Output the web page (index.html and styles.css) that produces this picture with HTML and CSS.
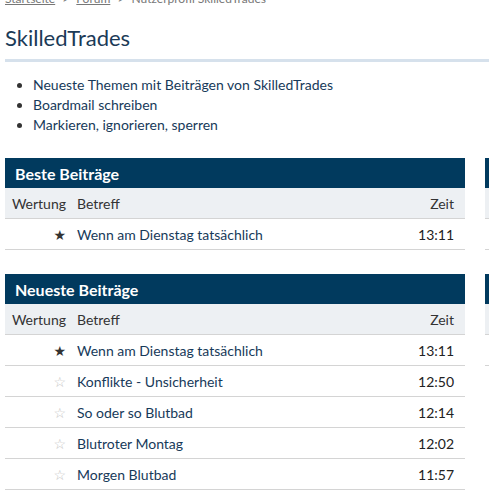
FILE: index.html
```html
<!DOCTYPE html>
<html>
<head>
    <title>Nutzerprofil SkilledTrades</title>
    <link rel="stylesheet" href="styles.css">
</head>
<body>
    <div class="page">
        <div class="crumbs">
            <a href="#">Startseite</a> <span class="sep">&gt;</span>
            <a href="#">Forum</a> <span class="sep">&gt;</span>
            Nutzerprofil SkilledTrades
        </div>

        <h1 class="title">SkilledTrades</h1>

        <ul class="links">
            <li><a href="#">Neueste Themen mit Beiträgen von SkilledTrades</a></li>
            <li><a href="#">Boardmail schreiben</a></li>
            <li><a href="#">Markieren, ignorieren, sperren</a></li>
        </ul>

        <div class="boards">
            <div class="panel">
                <h2 class="panel-title">Beste Beiträge</h2>
                <table class="posts">
                    <tr class="head">
                        <th class="rating">Wertung</th>
                        <th class="subject">Betreff</th>
                        <th class="time">Zeit</th>
                    </tr>
                    <tr>
                        <td class="rating"><span class="star on">★</span></td>
                        <td class="subject"><a href="#">Wenn am Dienstag tatsächlich</a></td>
                        <td class="time">13:11</td>
                    </tr>
                </table>
            </div>

            <div class="panel">
                <h2 class="panel-title">Beste Themen</h2>
                <table class="posts">
                    <tr class="head">
                        <th class="rating">Wertung</th>
                        <th class="subject">Thema</th>
                        <th class="time">Zeit</th>
                    </tr>
                    <tr>
                        <td class="rating"></td>
                        <td class="subject"></td>
                        <td class="time"></td>
                    </tr>
                </table>
            </div>

            <div class="panel">
                <h2 class="panel-title">Neueste Beiträge</h2>
                <table class="posts">
                    <tr class="head">
                        <th class="rating">Wertung</th>
                        <th class="subject">Betreff</th>
                        <th class="time">Zeit</th>
                    </tr>
                    <tr>
                        <td class="rating"><span class="star on">★</span></td>
                        <td class="subject"><a href="#">Wenn am Dienstag tatsächlich</a></td>
                        <td class="time">13:11</td>
                    </tr>
                    <tr>
                        <td class="rating"><span class="star">☆</span></td>
                        <td class="subject"><a href="#">Konflikte - Unsicherheit</a></td>
                        <td class="time">12:50</td>
                    </tr>
                    <tr>
                        <td class="rating"><span class="star">☆</span></td>
                        <td class="subject"><a href="#">So oder so Blutbad</a></td>
                        <td class="time">12:14</td>
                    </tr>
                    <tr>
                        <td class="rating"><span class="star">☆</span></td>
                        <td class="subject"><a href="#">Blutroter Montag</a></td>
                        <td class="time">12:02</td>
                    </tr>
                    <tr>
                        <td class="rating"><span class="star">☆</span></td>
                        <td class="subject"><a href="#">Morgen Blutbad</a></td>
                        <td class="time">11:57</td>
                    </tr>
                </table>
            </div>

            <div class="panel">
                <h2 class="panel-title">Neueste Themen</h2>
                <table class="posts">
                    <tr class="head">
                        <th class="rating">Wertung</th>
                        <th class="subject">Thema</th>
                        <th class="time">Zeit</th>
                    </tr>
                    <tr>
                        <td class="rating"></td>
                        <td class="subject"></td>
                        <td class="time"></td>
                    </tr>
                </table>
            </div>
        </div>
    </div>
</body>
</html>
```

FILE: styles.css
```css
html, body {
    margin: 0;
    overflow: hidden;
    background: #fff;
}

body {
    font-family: Lato, "Open Sans", sans-serif;
    color: #333;
}

a {
    color: #173a5a;
    text-decoration: none;
}

.page {
    width: 960px;
    padding-left: 5px;
}

.crumbs {
    margin-top: -8px;
    height: 14px;
    font-size: 12px;
    line-height: 14px;
    color: #777;
}

.crumbs a {
    color: #777;
    text-decoration: underline;
}

.crumbs .sep {
    margin: 0 4px;
}

.title {
    margin: 18px 0 0;
    padding-bottom: 7px;
    font-size: 22px;
    line-height: 28px;
    font-weight: normal;
    color: #1b3a57;
    border-bottom: 3px solid #d6e1ec;
}

.links {
    margin: 13px 0 0;
    padding-left: 28px;
    font-size: 14px;
    line-height: 20px;
}

.boards {
    display: grid;
    grid-template-columns: 460px 460px;
    column-gap: 20px;
    row-gap: 24px;
    margin-top: 23px;
}

.panel-title {
    margin: 0;
    height: 30px;
    padding-left: 10px;
    background: #013a5e;
    color: #fff;
    font-size: 16px;
    font-weight: bold;
    line-height: 31px;
}

.posts {
    width: 100%;
    border-collapse: collapse;
    font-size: 14px;
}

.posts th,
.posts td {
    height: 30px;
    padding: 0;
    border-bottom: 1px solid #d4d4d4;
    font-weight: normal;
    text-align: left;
    vertical-align: middle;
}

.posts .head th {
    background: #edf0f3;
    color: #333;
}

.posts .rating {
    width: 61px;
    padding-right: 6px;
    text-align: right;
}

.posts .subject {
    padding-left: 5px;
}

.posts .time {
    padding-right: 11px;
    text-align: right;
    color: #222;
}

.star {
    font-family: "DejaVu Sans", sans-serif;
    font-size: 14px;
    color: #c4c4c4;
}

.star.on {
    color: #333;
}
```
